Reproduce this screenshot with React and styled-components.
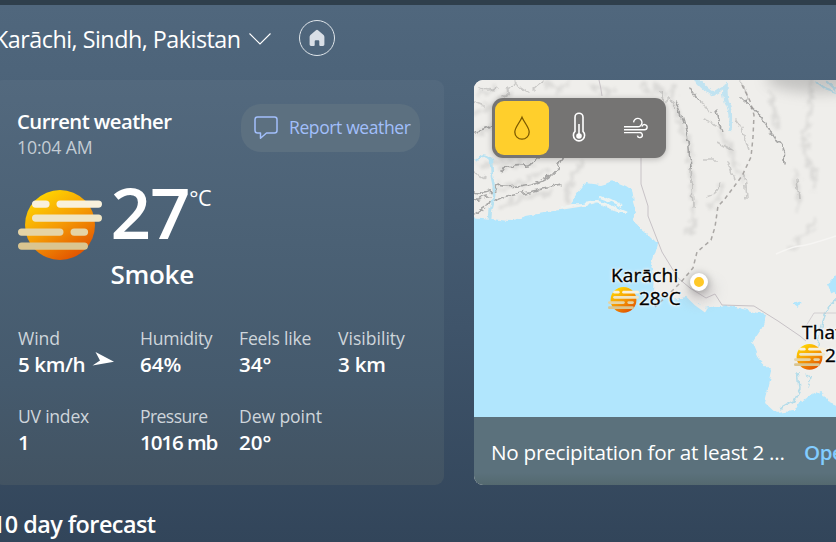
import React from 'react';
import styled, { createGlobalStyle } from 'styled-components';

const Global = createGlobalStyle`
  *, *::before, *::after { box-sizing: border-box; }
  html, body { margin: 0; height: 100%; overflow: hidden; }
  body { font-family: "Open Sans", "Noto Sans", sans-serif; color: #fff; background: #33465b; }
`;

const Page = styled.div`
  width: 100vw;
  height: 100vh;
  overflow: hidden;
  display: flex;
  flex-direction: column;
  background: linear-gradient(180deg, #50677d 0%, #4c6379 16%, #3f546a 60%, #32455a 100%);
  border-top: 5px solid #2f3f4c;
`;

const Text = styled.span`
  display: block;
  flex-shrink: 0;
  white-space: nowrap;
  letter-spacing: ${(p) => p.$track || 0}px;
`;

const Header = styled.header`
  height: 66px;
  margin: 0 0 9px -6px;
  display: flex;
  align-items: center;
  flex-shrink: 0;
`;

const Location = styled(Text)`
  width: 254px;
  font-size: 23.3px;
  line-height: 32px;
  padding-top: 1px;
`;

const Chevron = styled.svg`
  width: 24px;
  height: 14px;
  margin-top: 2px;
  flex-shrink: 0;
`;

const HomeButton = styled.div`
  width: 36px;
  height: 36px;
  margin-left: 27px;
  border: 1px solid #dfe5ea;
  border-radius: 50%;
  display: grid;
  place-items: center;
`;

const Panels = styled.main`
  display: flex;
  gap: 30px;
  height: 405px;
  margin-left: -6px;
  flex-shrink: 0;
`;

const Card = styled.section`
  width: 450px;
  flex-shrink: 0;
  padding: 24px 24px 0 24px;
  border-radius: 9px;
  background: linear-gradient(180deg, #53697e 0%, #4b6175 40%, #455a6d 75%, #425362 100%);
`;

const CardTop = styled.div`
  display: flex;
  justify-content: space-between;
  align-items: flex-start;
  height: 71px;
`;

const Heading = styled.div`
  padding-top: 3px;
  margin-left: -1px;
`;

const CardTitle = styled(Text)`
  font-size: 20.3px;
  line-height: 28px;
  font-weight: 600;
`;

const Time = styled(Text)`
  font-size: 17.7px;
  line-height: 24px;
  color: #c3ccd4;
`;

const ReportButton = styled.div`
  width: 179px;
  height: 48px;
  padding-left: 12px;
  border-radius: 20px;
  background: #5c7080;
  display: flex;
  align-items: center;
  gap: 10px;
  color: #a2bffb;
`;

const ReportLabel = styled(Text)`
  font-size: 17.5px;
  line-height: 24px;
  padding-bottom: 3px;
`;

const Current = styled.div`
  display: flex;
  gap: 8.5px;
  height: 151px;
`;

const SunSvg = styled.svg`
  width: ${(p) => p.$w}px;
  height: ${(p) => (p.$w * 70) / 84}px;
  margin-top: ${(p) => p.$top || 0}px;
  flex-shrink: 0;
`;

const TempRow = styled.div`
  display: flex;
  height: 81px;
`;

const Temp = styled(Text)`
  font-size: 71px;
  line-height: 73px;
  font-weight: 600;
`;

const Unit = styled(Text)`
  font-size: 21.5px;
  line-height: 30px;
  padding-top: 8px;
`;

const Condition = styled(Text)`
  font-size: 26px;
  line-height: 36px;
  font-weight: 600;
`;

const Stats = styled.div`
  display: grid;
  grid-template-columns: 122px 99px 99px auto;
  row-gap: 27px;
`;

const StatLabel = styled(Text)`
  font-size: 17.6px;
  line-height: 25px;
  color: #ced5db;
`;

const StatValue = styled.div`
  display: flex;
  height: 26px;
  gap: 7px;
`;

const StatNumber = styled(Text)`
  font-size: 20.6px;
  line-height: 27px;
  font-weight: 600;
`;

const MapCard = styled.section`
  width: 420px;
  flex-shrink: 0;
  position: relative;
  display: flex;
  flex-direction: column;
  border-radius: 9px;
  overflow: hidden;
  background: #efeeeb;
`;

const MapCanvas = styled.svg`
  width: 362px;
  height: 337px;
  display: block;
`;

const MapFooter = styled.div`
  height: 68px;
  display: flex;
  align-items: center;
  padding-left: 17px;
  background: linear-gradient(180deg, #5b717c 0%, #5b717c 82%, #54696f 100%);
`;

const FooterText = styled(Text)`
  width: 313px;
  font-size: 20.7px;
  line-height: 28px;
  padding-top: 1px;
`;

const FooterLink = styled(Text)`
  font-size: 20.5px;
  line-height: 28px;
  padding-top: 1px;
  font-weight: 600;
  color: #82ccff;
`;

const Toolbar = styled.div`
  position: absolute;
  left: 18px;
  top: 18px;
  display: flex;
  gap: 3px;
  padding: 3px;
  border-radius: 11px;
  background: #757473;
  box-shadow: 0 1px 6px rgba(0, 0, 0, 0.25);
`;

const Tool = styled.div`
  width: 54px;
  height: 54px;
  border-radius: 9px;
  display: grid;
  place-items: center;
  background: ${(p) => (p.$active ? '#ffcf2c' : 'transparent')};
`;

const Marker = styled.div`
  position: absolute;
  left: ${(p) => p.$x}px;
  top: ${(p) => p.$y}px;
  color: #000;
  font-size: 19px;
  line-height: 23px;
  -webkit-text-stroke: 0.35px #000;
  text-shadow: 0 0 2px #fff, 0 0 2px #fff, 0 0 3px #fff, 0 0 4px #fff;
`;

const MarkerName = styled(Text)`
  padding-left: ${(p) => p.$pad}px;
`;

const MarkerRow = styled.div`
  display: flex;
  height: 27px;
`;

const Pin = styled.div`
  position: absolute;
  left: 216px;
  top: 193px;
  width: 18px;
  height: 18px;
  border: 4px solid #fff;
  border-radius: 50%;
  background: #ffc928;
  box-shadow: 0 1px 8px rgba(0, 0, 0, 0.35);
`;

const Forecast = styled(Text)`
  font-size: 23.4px;
  line-height: 32px;
  font-weight: 600;
  margin: 23px 0 0 -8px;
`;

function Sun({ w, top, id }) {
  return (
    <SunSvg $w={w} $top={top} viewBox="0 0 84 70">
      <defs>
        <linearGradient id={id} x1="0.2" y1="0.05" x2="0.75" y2="0.95">
          <stop offset="0" stopColor="#ffd600" />
          <stop offset="0.5" stopColor="#f59b05" />
          <stop offset="1" stopColor="#e25400" />
        </linearGradient>
      </defs>
      <circle cx="42" cy="35" r="35" fill={`url(#${id})`} />
      <g fill="#f9f1dc">
        <rect x="14" y="10.4" width="17.6" height="7.4" rx="3.7" />
        <rect x="38.5" y="10.4" width="45.5" height="7.4" rx="3.7" />
      </g>
      <rect x="14" y="24.4" width="70" height="7.4" rx="3.7" fill="#f0e5c4" />
      <g fill="#e5d4a6">
        <rect x="0" y="38.4" width="45.5" height="7.4" rx="3.7" />
        <rect x="52.5" y="38.4" width="17.6" height="7.4" rx="3.7" />
      </g>
      <rect x="0" y="52.4" width="70" height="7.4" rx="3.7" fill="#dac590" />
    </SunSvg>
  );
}

function Stat({ label, lt, value, vt, children }) {
  return (
    <div>
      <StatLabel $track={lt}>{label}</StatLabel>
      <StatValue>
        <StatNumber $track={vt}>{value}</StatNumber>
        {children}
      </StatValue>
    </div>
  );
}

function WeatherMap() {
  return (
    <MapCanvas viewBox="474 80 362 337">
      <defs>
        <filter id="rough" x="-5%" y="-5%" width="110%" height="110%">
          <feTurbulence type="fractalNoise" baseFrequency="0.12" numOctaves="3" seed="4" result="n" />
          <feDisplacementMap in="SourceGraphic" in2="n" scale="6" xChannelSelector="R" yChannelSelector="G" result="d" />
          <feGaussianBlur in="d" stdDeviation="0.4" />
        </filter>
        <filter id="slope" x="-5%" y="-5%" width="110%" height="110%">
          <feTurbulence type="fractalNoise" baseFrequency="0.14" numOctaves="4" seed="9" result="n" />
          <feDisplacementMap in="SourceGraphic" in2="n" scale="14" xChannelSelector="R" yChannelSelector="G" result="d" />
          <feGaussianBlur in="d" stdDeviation="1.5" />
        </filter>
        <filter id="ridge" x="-5%" y="-5%" width="110%" height="110%">
          <feTurbulence type="fractalNoise" baseFrequency="0.12" numOctaves="3" seed="9" result="n" />
          <feDisplacementMap in="SourceGraphic" in2="n" scale="8" xChannelSelector="R" yChannelSelector="G" result="d" />
          <feGaussianBlur in="d" stdDeviation="0.75" />
        </filter>
        <filter id="soft" x="-50%" y="-80%" width="200%" height="260%"><feGaussianBlur stdDeviation="7" /></filter>
      </defs>
      <rect x="474" y="80" width="362" height="337" fill="#efeeeb" />
      <g filter="url(#slope)" fill="none" stroke="#808080" strokeLinecap="round" strokeWidth="4" opacity="0.17">
        <path d="M474 135C486 134 490 124 500 120M478 96l18-8M474 112c12 1 20-10 36-20M480 165q20-2 30-4" />
        <path d="M498 187C520 189 534 171 552 170M501 170q14-8 30-5M500 207q24-12 52-15" />
        <path d="M582 162q-10 14-12 22t-4 18M672 88q4 26 11 40t8 38 3 40-3 26" />
        <path d="M709 207q14-8 12-22M722 134q8 10 10 22t12 24M770 92q5 20 8 36M810 80q3 24-3 44t1 42M794 172q8 20 2 38M815 170v20" />
        <path d="M545 80l12 12 12-10M590 85q12 10 26 4M640 85q16 12 26 8M655 82l9 14M684 232l9-10M790 250l25-28" />
      </g>
      <g filter="url(#ridge)" fill="none" stroke="#808080" strokeLinecap="round">
        <g strokeWidth="1.6" opacity="0.65">
          <path d="M474 132q10-1 16-4t9-9M474 200q10-4 16-4M498 186c18 4 37-1 46-6s17-14 21-28" />
          <path d="M500 171q13-8 23-6t20-10M474 192q16 4 26-6M474 213q20-14 34-17t30-6 23-5" />
          <path d="M742 98q16 12 24 26t14 20 4 18M690 88q6 10 10 14M676 100q9 22 11 34t4 34M717 110q2 12 6 20" />
        </g>
        <g strokeWidth="1.6" opacity="0.32">
          <path d="M480 88q8 6 16 0M504 96l12-14M516 84l12 8M474 102l10 4M533 90l12-10M474 172l12 6" />
          <path d="M660 90l4 14 6-6 5 12M700 103l12 10M740 82q10 10 6 18M736 119q8 12 13 30M691 166l2 40" />
          <path d="M718 142l14 8M706 160h12M706 197q10-2 14-14M784 156v8M745 175l2 24M704 121l17 7M797 178l2 20 M728 160l6 20" />
        </g>
      </g>
      <g filter="url(#rough)" fill="none" stroke="#b8e2f2">
        <path d="M697 80q8 9 16 14l12-8q-1 14 3 20t1 24" strokeWidth="3.6" opacity="0.85" />
        <path d="M476 160q8-8 15-1l1 18q4 16 1 25t-3 18" strokeWidth="2.6" />
        <path d="M816 82l9 7 11 4M826 80l10 10" strokeWidth="2.2" />
      </g>
      <g filter="url(#rough)" fill="#b1e6fd">
        <path d="M470 217L492 219L508 221L526 216L560 210L598 204L614 210L630 214L634 222L645 231L658 244L652 264L655 276L654 292L672 300L687 297L704 308L727 305L740 308L766 315L762 328L752 343L758 358L771 372L767 390L764 402L776 413L794 411L800 401L810 396L821 390L828 401L842 407V424H470Z" />
        <path d="M570 203L577 193L585 183L600 185L614 181L626 186L632 190L634 202L637 212L631 222L622 212L607 206L590 204Z" />
        <path d="M828 284l5-4 4-7v22l-6-3zM793 304l6-2 4 2-6 3z" />
      </g>
      <path d="M560 207.500l38-5.500 14 5 14 6M600 197l11 4 12 6" fill="none" stroke="#eef3f1" strokeWidth="2.6" filter="url(#rough)" />
      <path d="M688 296l8 8 10 7" fill="none" stroke="#efeeeb" strokeWidth="3.500" />
      <g filter="url(#rough)" fill="none" stroke="#b4dcea" strokeWidth="1.5">
        <path d="M798 371l2 18-6 12-14 8M805 374l6 4-3 10M836 300q-13 8-18 46" />
      </g>
      <g fill="none" stroke="#c7c2c6" strokeWidth="1">
        <path d="M599 80q2 8 3 16M641 157v27l7 22v10l14 36 16 26 12 10 16 10 9-4 7 11 32 1 24 15 22 15 6 5" />
        <path d="M806 326l8-13h22" opacity="0.7" />
      </g>
      <path d="M742 85l8 16 4 14-1 22-2 20-9 19-18 24-6 6-3 21-4 13-14 12-4 16-12 14-10 10-16 15" fill="none" stroke="#9d9a98" strokeWidth="1.5" strokeDasharray="4 3.5" opacity="0.85" />
      <path d="M776 254q18-8 24-8t36-10" fill="none" stroke="#f6f5f3" strokeWidth="1.5" />
      <ellipse cx="820" cy="78" rx="54" ry="15" fill="#777" opacity="0.36" filter="url(#soft)" />
      <path d="M683 292q10 14 24 8l10-10-8-8z" fill="#aaa3a7" opacity="0.45" filter="url(#soft)" />
    </MapCanvas>
  );
}

export default function App() {
  return (
    <Page>
      <Global />
      <Header>
        <Location $track={-0.49}>Karāchi, Sindh, Pakistan</Location>
        <Chevron viewBox="0 0 24 14" fill="none" stroke="#fff" strokeWidth="1.1">
          <path d="M1.5 1.5L12 12L22.5 1.5" />
        </Chevron>
        <HomeButton>
          <svg width="16" height="18" viewBox="0 0 16 18">
            <path d="M7 1.2Q8 .4 9 1.2L14.6 6Q15.4 6.8 15.4 8V15.6Q15.4 17 14 17H11.3Q10.3 17 10.3 16V12.3Q10.3 11.3 9.3 11.3H6.7Q5.7 11.3 5.7 12.3V16Q5.7 17 4.7 17H2Q.6 17 .6 15.6V8Q.6 6.8 1.4 6Z" fill="#d9dfe6" />
          </svg>
        </HomeButton>
      </Header>
      <Panels>
        <Card>
          <CardTop>
            <Heading>
              <CardTitle $track={-0.53}>Current weather</CardTitle>
              <Time $track={-0.17}>10:04 AM</Time>
            </Heading>
            <ReportButton>
              <svg width="26" height="26" viewBox="0 0 26 26" fill="none" stroke="#a2bffb" strokeWidth="1.5" strokeLinejoin="round">
                <path d="M4.5 2H21.5Q24 2 24 4.5V15.5Q24 18 21.5 18H13.5L7.5 23.2V18H4.5Q2 18 2 15.5V4.5Q2 2 4.5 2Z" />
              </svg>
              <ReportLabel $track={-0.38}>Report weather</ReportLabel>
            </ReportButton>
          </CardTop>
          <Current>
            <Sun w={84} top={15} id="sunLarge" />
            <div>
              <TempRow>
                <Temp $track={-1.2}>27</Temp>
                <Unit $track={-0.4}>°C</Unit>
              </TempRow>
              <Condition $track={-0.3}>Smoke</Condition>
            </div>
          </Current>
          <Stats>
            <Stat label="Wind" lt={-0.1} value="5 km/h" vt={-0.4}>
              <svg width="23" height="18" viewBox="0 0 23 18">
                <path d="M3.5 1L22 10.8L.5 14.5L8 9.5Z" fill="#fff" />
              </svg>
            </Stat>
            <Stat label="Humidity" lt={-0.3} value="64%" />
            <Stat label="Feels like" lt={-0.2} value="34°" />
            <Stat label="Visibility" value="3 km" vt={-0.2} />
            <Stat label="UV index" lt={-0.25} value="1" />
            <Stat label="Pressure" lt={-0.6} value="1016 mb" vt={-1.1} />
            <Stat label="Dew point" lt={-0.1} value="20°" />
          </Stats>
        </Card>
        <MapCard>
          <WeatherMap />
          <Toolbar>
            <Tool $active>
              <svg width="18" height="26" viewBox="0 0 18 26" fill="none" stroke="#7c5a00" strokeWidth="1.3">
                <path d="M9 2.2C6.5 8 1.8 12.5 1.8 17A7.2 7.2 0 0 0 16.2 17C16.2 12.5 11.5 8 9 2.2Z" />
              </svg>
            </Tool>
            <Tool>
              <svg width="16" height="32" viewBox="0 0 16 32" fill="none" stroke="#fff" strokeWidth="1.6">
                <path d="M4 19.4V5.2A4 4 0 0 1 12 5.2V19.4A5.6 5.6 0 1 1 4 19.4Z" />
                <path d="M8 12V23" />
                <circle cx="8" cy="24" r="2.8" fill="#fff" stroke="none" />
              </svg>
            </Tool>
            <Tool>
              <svg width="26" height="22" viewBox="0 0 26 22" fill="none" stroke="#fff" strokeWidth="1.4">
                <path d="M1 9.8H14.5A4.2 4.2 0 1 0 10.6 5.4" />
                <path d="M1 12.8H21.5A2.6 2.6 0 1 0 19 9.6" />
                <path d="M1 15.6H16.5A2.5 2.5 0 1 1 14.4 18.6" />
              </svg>
            </Tool>
          </Toolbar>
          <Pin />
          <Marker $x={134} $y={184}>
            <MarkerName $track={0.2} $pad={3}>Karāchi</MarkerName>
            <MarkerRow>
              <Sun w={31} id="sunKarachi" />
              <Text>28°C</Text>
            </MarkerRow>
          </Marker>
          <Marker $x={320} $y={241}>
            <MarkerName $track={0.2} $pad={8}>Thatta</MarkerName>
            <MarkerRow>
              <Sun w={31} id="sunThatta" />
              <Text>29°C</Text>
            </MarkerRow>
          </Marker>
          <MapFooter>
            <FooterText $track={-0.27}>No precipitation for at least 2 ...</FooterText>
            <FooterLink $track={-0.5}>Open map</FooterLink>
          </MapFooter>
        </MapCard>
      </Panels>
      <Forecast $track={-0.55}>10 day forecast</Forecast>
    </Page>
  );
}
